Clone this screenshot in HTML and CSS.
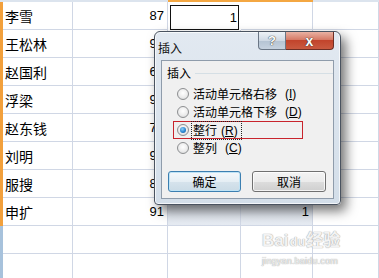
FILE: index.html
```html
<!DOCTYPE html>
<html lang="zh-CN">

<head>
	<meta charset="UTF-8">
	<title>插入</title>
	<link rel="stylesheet" href="styles.css">
</head>

<body>
	<!-- 表格 -->
	<div class="sheet">
		<span class="hd"></span><span class="hd"></span><span class="hd"></span><span class="hd sel"></span><span class="hd sel"></span><span class="hd"></span>

		<span class="rh sel"></span><span class="c name">李雪</span><span class="c num">87</span><span class="c num active">1</span><span class="c"></span><span class="c"></span>
		<span class="rh sel"></span><span class="c name">王松林</span><span class="c num">95</span><span class="c"></span><span class="c"></span><span class="c"></span>
		<span class="rh sel"></span><span class="c name">赵国利</span><span class="c num">68</span><span class="c"></span><span class="c"></span><span class="c"></span>
		<span class="rh sel"></span><span class="c name">浮梁</span><span class="c num">93</span><span class="c"></span><span class="c"></span><span class="c"></span>
		<span class="rh sel"></span><span class="c name">赵东钱</span><span class="c num">76</span><span class="c"></span><span class="c"></span><span class="c"></span>
		<span class="rh sel"></span><span class="c name">刘明</span><span class="c num">92</span><span class="c"></span><span class="c"></span><span class="c"></span>
		<span class="rh sel"></span><span class="c name">服搜</span><span class="c num">85</span><span class="c"></span><span class="c"></span><span class="c"></span>
		<span class="rh sel"></span><span class="c name">申扩</span><span class="c num">91</span><span class="c shade"></span><span class="c num shade">1</span><span class="c"></span>
		<span class="rh"></span><span class="c"></span><span class="c"></span><span class="c"></span><span class="c"></span><span class="c"></span>
		<span class="rh"></span><span class="c"></span><span class="c"></span><span class="c"></span><span class="c"></span><span class="c"></span>
	</div>

	<!-- 插入对话框 -->
	<div class="dialog">
		<div class="titlebar">
			<span class="title">插入</span>
			<div class="caption">
				<span class="cbtn help">?</span>
				<span class="cbtn close">x</span>
			</div>
		</div>
		<div class="client">
			<div class="legend"><span>插入</span><i class="rule"></i></div>
			<div class="opts">
				<label class="opt"><span class="radio"></span>活动单元格右移<span class="key">(<u>I</u>)</span></label>
				<label class="opt"><span class="radio"></span>活动单元格下移<span class="key">(<u>D</u>)</span></label>
				<label class="opt marked"><span class="radio on"><i class="dot"></i></span><span class="focus">整行<span class="key">(<u>R</u>)</span></span></label>
				<label class="opt"><span class="radio"></span>整列<span class="key">(<u>C</u>)</span></label>
			</div>
			<div class="btns">
				<span class="btn default">确定</span>
				<span class="btn cancel">取消</span>
			</div>
		</div>
	</div>

	<!-- 水印 -->
	<div class="mark">
		<div class="mark-logo">Bai<span class="paw">du</span>经验</div>
		<div class="mark-url">jingyan.baidu.com</div>
	</div>
</body>

</html>
```

FILE: styles.css
```css
html,
body {
	margin: 0;
	padding: 0;
	width: 379px;
	height: 278px;
	overflow: hidden;
	background: #fff;
	font-family: "Liberation Sans", "Noto Sans CJK SC", sans-serif;
	color: #000
}

/* 表格网格 */
.sheet {
	display: grid;
	grid-template-columns: 3px 70px 95px 73px 72px 66px;
	grid-template-rows: 2px;
	grid-auto-rows: 28px
}

.hd {
	background: #dce4ee
}

.hd.sel {
	background: #f4a742
}

.rh {
	background: #a7c2dc
}

.rh.sel {
	background: #f2a03c
}

.c {
	box-sizing: border-box;
	border-right: 1px solid #d0d7e5;
	border-bottom: 1px solid #d0d7e5;
	display: flex;
	align-items: center;
	font-size: 13px;
	padding: 0 3px 0 2px
}

.name {
	font-size: 14px
}

.num {
	justify-content: flex-end
}

.active {
	border: 1px solid #111;
	margin: 3px 2px 0 2px;
	padding-right: 1px;
	background: #fff
}

.shade {
	background: linear-gradient(#d9dfe8, #e6ebf2)
}

/* 对话框 */
.dialog {
	position: absolute;
	left: 154px;
	top: 31px;
	width: 187px;
	height: 174px;
	box-sizing: border-box;
	border: 1px solid #4a5360;
	border-radius: 6px 6px 4px 4px;
	background: linear-gradient(#e2e9f1, #d3dee9);
	box-shadow: 5px 6px 12px rgba(0, 0, 0, .55), inset 0 0 0 1px rgba(255, 255, 255, .7);
	display: flex;
	flex-direction: column;
	font-family: "Noto Sans CJK SC", "Liberation Sans", sans-serif;
	font-size: 12px
}

.titlebar {
	height: 28px;
	display: flex;
	align-items: flex-start
}

.title {
	padding: 9px 0 0 3px;
	line-height: 14px;
	color: #111
}

.caption {
	margin-left: auto;
	margin-right: 6px;
	display: flex
}

.cbtn {
	height: 18px;
	box-sizing: border-box;
	display: flex;
	align-items: center;
	justify-content: center;
	color: #fff;
	font-family: "Liberation Sans", sans-serif;
	font-weight: bold;
	font-size: 13px;
	text-shadow: 0 0 1px #333, 0 0 1px #333
}

.help {
	width: 28px;
	border: 1px solid #6a7685;
	border-top: none;
	border-radius: 0 0 0 4px;
	background: linear-gradient(#eef2f6, #cfd9e4 50%, #b4c3d3 51%, #c6d2df)
}

.close {
	width: 48px;
	border: 1px solid #6e2e24;
	border-top: none;
	border-left: none;
	border-radius: 0 0 4px 0;
	background: linear-gradient(#e9b2a3, #d67a66 45%, #c2442c 50%, #c95a40);
	font-size: 14px
}

.client {
	margin: 0 6px 5px;
	flex: 1;
	box-sizing: border-box;
	border: 1px solid #8f9cab;
	background: #f0f0f0;
	padding-top: 5px
}

.legend {
	display: flex;
	align-items: center;
	height: 14px;
	padding-left: 5px;
	line-height: 14px
}

.rule {
	flex: 1;
	height: 1px;
	margin-left: 4px;
	background: #d5dfe5
}

.opts {
	margin-top: 5px
}

.opt {
	display: flex;
	align-items: center;
	gap: 4px;
	width: 130px;
	height: 18px;
	box-sizing: border-box;
	margin-left: 11px;
	padding-left: 3px;
	border: 1px solid transparent;
	line-height: 14px;
	white-space: nowrap
}

.opt.marked {
	border-color: #c8242c
}

.key {
	font-family: "Liberation Sans", sans-serif;
	font-size: 12px;
	margin-left: 4px
}

.radio {
	flex: none;
	width: 12px;
	height: 12px;
	box-sizing: border-box;
	border-radius: 50%;
	border: 1px solid #8d8f91;
	background: radial-gradient(circle at 50% 40%, #fff 0, #ececec 55%, #cfd1d3 100%);
	display: flex;
	align-items: center;
	justify-content: center
}

.dot {
	width: 6px;
	height: 6px;
	border-radius: 50%;
	background: radial-gradient(circle at 40% 35%, #8fd0fa 0, #2a86d0 55%, #18558f 100%)
}

.focus {
	outline: 1px dotted #222;
	outline-offset: 1px;
	padding-right: 2px
}

.btns {
	display: flex;
	gap: 11px;
	margin: 14px 0 0 6px
}

.btn {
	width: 73px;
	height: 21px;
	box-sizing: border-box;
	border: 1px solid #707070;
	border-radius: 3px;
	display: flex;
	align-items: center;
	justify-content: center;
	background: linear-gradient(#f3f3f3, #ebebeb 50%, #dddddd 51%, #cfcfcf);
	box-shadow: inset 0 0 0 1px rgba(255, 255, 255, .75)
}

.btn.default {
	border-color: #3c7fb1;
	background: linear-gradient(#f4f8fb, #e5eef4 50%, #d6e3ec 51%, #cadbe6);
	box-shadow: inset 0 0 0 1px #bfe3f5
}

.btn.cancel {
	width: 74px
}

/* 百度经验水印 */
.mark {
	position: absolute;
	left: 262px;
	top: 230px;
	color: #f3f3f3;
	text-shadow: 0 0 1px #a9a9a9, 0 0 1px #a9a9a9
}

.mark-logo {
	font-family: "Liberation Sans", "Noto Sans CJK SC", sans-serif;
	font-weight: bold;
	font-size: 17px;
	line-height: 22px;
	white-space: nowrap
}

.paw {
	font-size: 13px;
	margin: 0 1px
}

.mark-url {
	font-size: 9px;
	line-height: 11px;
	margin-top: 3px;
	letter-spacing: .2px
}
```
